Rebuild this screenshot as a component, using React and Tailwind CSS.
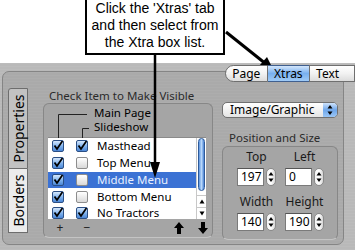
import React from "react";

function Check({ on }) {
  if (on) {
    return (
      <span className="w-[12px] h-[12px] rounded-[2px] border border-[#2b4f85] bg-gradient-to-b from-[#d6e8fc] via-[#84b5ee] to-[#4a86d6] flex items-center justify-center shrink-0">
        <svg width="10" height="10" viewBox="0 0 10 10">
          <path d="M1.5 4.5 L4 8 L9.5 0" stroke="#000" strokeWidth="1.8" fill="none" />
        </svg>
      </span>
    );
  }
  return (
    <span className="w-[12px] h-[12px] rounded-[2px] border border-[#8d8d8d] bg-gradient-to-b from-white to-[#d9d9d9] shrink-0" />
  );
}

function UpDown({ h = 12 }) {
  return (
    <svg width="6" height={h} viewBox={`0 0 6 ${h}`}>
      <path d={`M3 ${h / 2 - 5} L5.5 ${h / 2 - 1.5} H0.5 Z`} fill="#000" />
      <path d={`M3 ${h / 2 + 5} L5.5 ${h / 2 + 1.5} H0.5 Z`} fill="#000" />
    </svg>
  );
}

function Stepper() {
  return (
    <div className="w-[10px] h-[18px] rounded-full border border-[#8a8a8a] bg-gradient-to-r from-[#f4f4f4] via-white to-[#d6d6d6] flex items-center justify-center">
      <UpDown h={16} />
    </div>
  );
}

function Field({ label, value }) {
  return (
    <div className="flex flex-col items-center">
      <div className="h-[14px] text-[12px] leading-[14px] text-[#1a1a1a]">{label}</div>
      <div className="mt-[4px] flex items-center gap-[2px]">
        <div className="w-[27px] h-[18px] bg-white border border-[#7a7a7a] border-t-[#555] text-[12px] leading-[16px] pl-[3px] text-black">
          {value}
        </div>
        <Stepper />
      </div>
    </div>
  );
}

const rows = [
  { name: "Masthead", a: true, b: true },
  { name: "Top Menu", a: true, b: false },
  { name: "Middle Menu", a: true, b: false, sel: true },
  { name: "Bottom Menu", a: true, b: false },
  { name: "No Tractors", a: true, b: true },
];

export default function App() {
  return (
    <div className="relative w-[355px] h-[250px] overflow-hidden bg-white font-['Noto_Sans',sans-serif] flex flex-col">
      {/* callout */}
      <div className="h-[63px] shrink-0">
        <div className="ml-[85px] w-[140px] h-[55px] border-2 border-t-0 border-black bg-white flex flex-col items-center font-['Liberation_Sans',Arial,sans-serif] text-[14px] leading-[17px] text-black">
          <span>Click the 'Xtras' tab</span>
          <span>and then select from</span>
          <span>the Xtra box list.</span>
        </div>
      </div>

      {/* metal window */}
      <div className="flex-1 bg-[#bcbcbc] bg-[repeating-linear-gradient(0deg,#bcbcbc_0px,#bcbcbc_1px,#b6b6b6_2px,#bcbcbc_3px)] flex flex-col">
        <div className="relative z-10 h-[17px] mt-[2px] pl-[225px] flex shrink-0">
          <div className="w-[47px] h-[17px] rounded-l-[9px] border border-[#6f6f6f] bg-gradient-to-b from-white via-[#f2f2f2] to-[#dcdcdc] text-[12px] leading-[15px] text-center text-black">
            Page
          </div>
          <div className="w-[46px] h-[17px] border-y border-[#3f5f8f] bg-gradient-to-b from-[#d3e6fb] via-[#78b0ef] to-[#9fcaf6] text-[12px] leading-[15px] text-center text-black">
            Xtras
          </div>
          <div className="w-[50px] h-[17px] border border-[#6f6f6f] bg-gradient-to-b from-white via-[#f2f2f2] to-[#dcdcdc] text-[12px] leading-[15px] pl-[6px] text-black">
            Text
          </div>
        </div>

        <div className="-mt-[11px] ml-[2px] w-[342px] h-[174px] rounded-[7px] border border-[#858585] bg-[#acacac] bg-[repeating-linear-gradient(0deg,#adadad_0px,#adadad_1px,#a7a7a7_2px,#adadad_3px)] flex">
          {/* vertical tabs */}
          <div className="ml-[5px] mt-[16px] w-[20px] flex flex-col shrink-0">
            <div className="h-[81px] rounded-tl-[3px] border border-[#6d6d6d] bg-[#c2c2c2] flex items-center justify-center">
              <span className="-rotate-90 whitespace-nowrap text-[14px] text-black">Properties</span>
            </div>
            <div className="h-[64px] border border-t-0 border-[#6d6d6d] bg-[#ececec] flex items-center justify-center">
              <span className="-rotate-90 whitespace-nowrap text-[14px] text-black">Borders</span>
            </div>
          </div>

          {/* visibility list */}
          <div className="ml-[15px] w-[170px] flex flex-col shrink-0">
            <div className="mt-[16px] h-[15px] pl-[6px] text-[11.5px] leading-[15px] text-[#2a2a2a] whitespace-nowrap">
              Check Item to Make Visible
            </div>
            <div className="h-[135px] rounded-[6px] border border-[#878787] border-b-[#c4c4c4] bg-[#a5a5a5] flex flex-col">
              <div className="relative h-[33px] pt-[2px] pl-[50px] text-[11.5px] leading-[14px] text-black">
                <svg className="absolute left-0 top-0" width="60" height="34">
                  <path d="M14.5 34 V10.5 H43" stroke="#222" strokeWidth="1" fill="none" />
                  <path d="M38.5 34 V24.5 H45" stroke="#222" strokeWidth="1" fill="none" />
                </svg>
                <div>Main Page</div>
                <div>Slideshow</div>
              </div>
              <div className="ml-[4px] w-[158px] h-[82px] bg-white border-t border-[#8a8a8a] flex overflow-hidden">
                <div className="w-[148px] flex flex-col">
                  {rows.map((r) => (
                    <div
                      key={r.name}
                      className={`h-[16.75px] shrink-0 flex items-center pl-[4px] ${r.sel ? "bg-[#3b72d4] text-[#e8f0ff]" : "text-black"}`}
                    >
                      <Check on={r.a} />
                      <span className="ml-[12px]" />
                      <Check on={r.b} />
                      <span className="ml-[9px] text-[11.5px] leading-[14px] whitespace-nowrap">{r.name}</span>
                    </div>
                  ))}
                </div>
                <div className="w-[10px] border-l border-[#c8c8c8] flex flex-col">
                  <div className="h-[53px] mx-[1px] rounded-full border border-[#2d5a9a] bg-gradient-to-r from-[#5d95e0] via-[#b9d8fa] to-[#4a82d2]" />
                  <div className="flex-1" />
                  <div className="h-[12px] border-t border-[#c8c8c8] flex items-center justify-center">
                    <svg width="6" height="5" viewBox="0 0 6 5"><path d="M3 0.5 L5.5 4.5 H0.5 Z" fill="#000" /></svg>
                  </div>
                  <div className="h-[12px] border-t border-[#c8c8c8] flex items-center justify-center">
                    <svg width="6" height="5" viewBox="0 0 6 5"><path d="M3 4.5 L5.5 0.5 H0.5 Z" fill="#000" /></svg>
                  </div>
                </div>
              </div>
              <div className="flex items-center h-[18px] text-[12px] text-[#222]">
                <span className="ml-[11px] w-[10px] text-center">+</span>
                <span className="ml-[17px] w-[10px] text-center">−</span>
                <svg className="ml-[82px]" width="10" height="12" viewBox="0 0 10 12">
                  <path d="M5 0 L10 6 H7 V12 H3 V6 H0 Z" fill="#000" />
                </svg>
                <svg className="ml-[14px]" width="10" height="12" viewBox="0 0 10 12">
                  <path d="M5 12 L10 6 H7 V0 H3 V6 H0 Z" fill="#000" />
                </svg>
              </div>
            </div>
          </div>

          {/* right column */}
          <div className="ml-[9px] w-[116px] flex flex-col shrink-0">
            <div className="mt-[30px] h-[16px] rounded-[5px] border border-[#707070] bg-gradient-to-b from-white to-[#e4e4e4] flex items-center">
              <span className="flex-1 pl-[7px] text-[12px] leading-[14px] text-black">Image/Graphic</span>
              <div className="w-[14px] h-[14px] rounded-r-[4px] bg-gradient-to-b from-[#cfe3fb] via-[#6ea6ea] to-[#9ac6f5] flex items-center justify-center">
                <UpDown h={12} />
              </div>
            </div>
            <div className="mt-[13px] h-[14px] pl-[7px] text-[11.5px] leading-[14px] text-[#2a2a2a] whitespace-nowrap">
              Position and Size
            </div>
            <div className="mt-[1px] h-[94px] rounded-[6px] border border-[#878787] border-b-[#c4c4c4] bg-[#a5a5a5] pt-[3px] pl-[13px] grid grid-cols-[41px_41px] gap-x-[7px] gap-y-[9px] content-start">
              <Field label="Top" value="197" />
              <Field label="Left" value="0" />
              <Field label="Width" value="140" />
              <Field label="Height" value="190" />
            </div>
          </div>
        </div>
      </div>

      {/* pointer arrows */}
      <svg className="absolute left-0 top-0 pointer-events-none" width="355" height="250">
        <line x1="226" y1="32" x2="266" y2="64" stroke="#000" strokeWidth="3" />
        <path d="M274 71 L259 66 L267 57 Z" fill="#000" />
        <line x1="155" y1="54" x2="155" y2="164" stroke="#000" strokeWidth="2.5" />
        <path d="M155 178 L150 162 L160 162 Z" fill="#000" />
      </svg>
    </div>
  );
}
